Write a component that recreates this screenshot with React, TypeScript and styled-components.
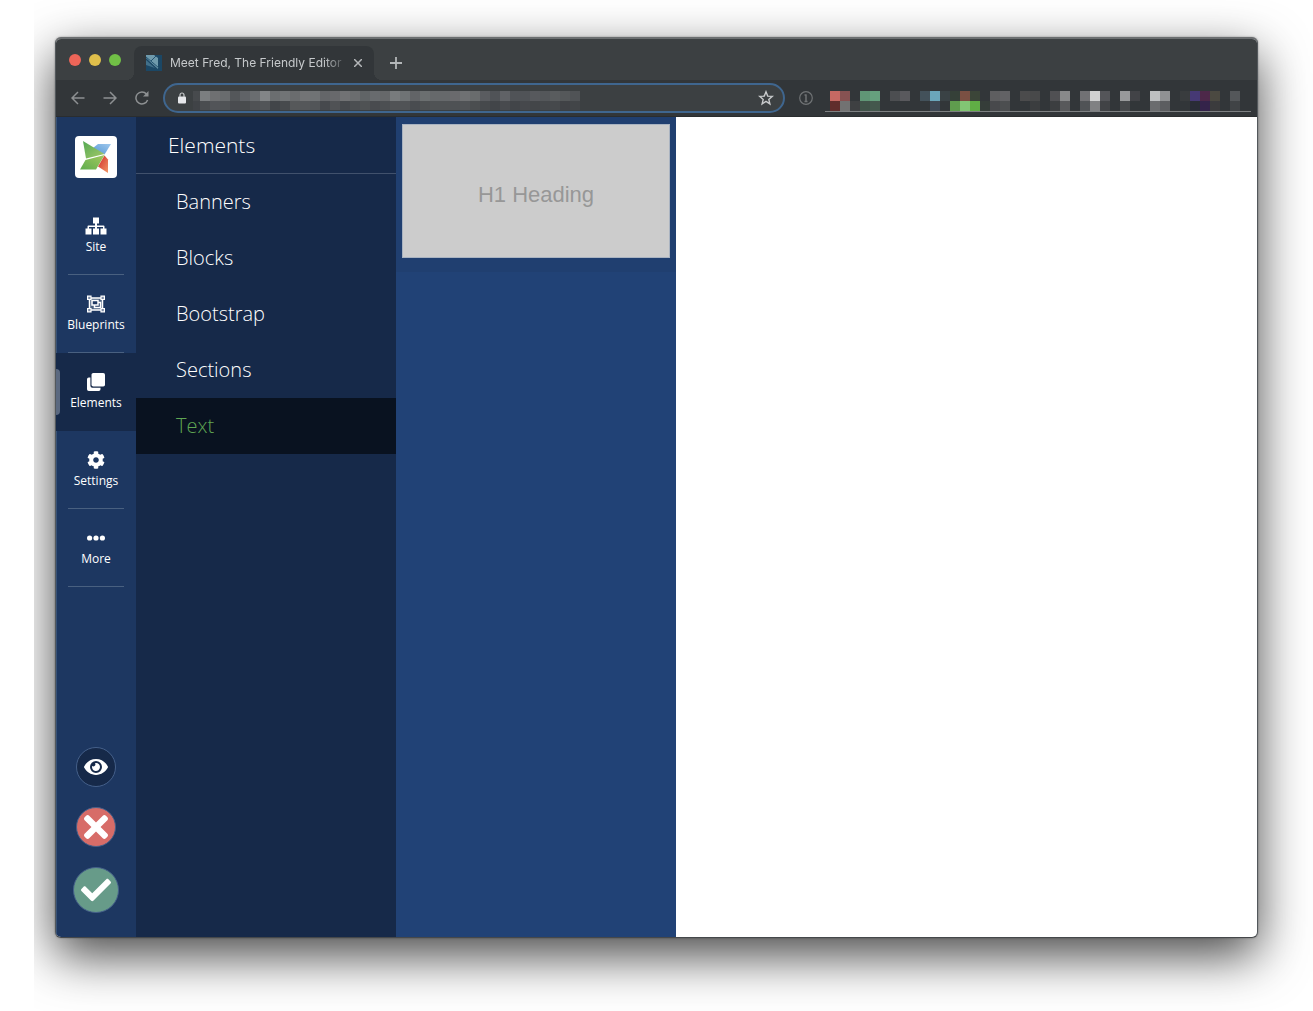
import React from "react";
import styled, { createGlobalStyle } from "styled-components";

const GlobalStyle = createGlobalStyle`
  *, *::before, *::after { box-sizing: border-box; }
  body { margin: 0; background: #fff; font-family: "Open Sans", "Noto Sans", sans-serif; }
  button, a { font: inherit; color: inherit; text-decoration: none; cursor: pointer; }
  button { border: 0; padding: 0; background: none; }
  svg { display: block; flex: none; }
`;

const Desktop = styled.div`
  min-height: 100vh;
  display: flex;
  margin-left: 34px;
  padding: 37px 55px 73px 21px;
  overflow: hidden;
`;

const BrowserWindow = styled.div`
  flex: 1;
  min-width: 0;
  display: flex;
  flex-direction: column;
  overflow: hidden;
  border: 1px solid #53585c;
  border-top: 2px solid #6b6e70;
  border-bottom-color: #45484b;
  border-radius: 6px;
  background: #fff;
  box-shadow: 0 0 2px rgba(0, 0, 0, 0.4), 0 18px 50px rgba(0, 0, 0, 0.72);
`;

const TabStrip = styled.div`
  height: 41px;
  display: flex;
  align-items: flex-end;
  background: #3c4042;
`;

const Lights = styled.div`
  display: flex;
  gap: 8px;
  align-self: center;
  padding: 0 13px;
`;

const Light = styled.button<{ $color: string }>`
  width: 12px;
  height: 12px;
  border-radius: 50%;
  background: ${(p) => p.$color};
`;

const Tab = styled.div`
  position: relative;
  width: 240px;
  height: 34px;
  display: flex;
  align-items: center;
  padding: 0 10px 0 12px;
  border-radius: 8px 8px 0 0;
  background: #323639;

  &::before,
  &::after {
    content: "";
    position: absolute;
    bottom: 0;
    width: 8px;
    height: 8px;
  }
  &::before {
    right: 100%;
    background: radial-gradient(circle at 0 0, transparent 8px, #323639 8px);
  }
  &::after {
    left: 100%;
    background: radial-gradient(circle at 100% 0, transparent 8px, #323639 8px);
  }
`;

const TabTitle = styled.span`
  flex: 1;
  margin: 0 7px 0 8px;
  overflow: hidden;
  white-space: nowrap;
  font: 12px/16px Inter, "Liberation Sans", sans-serif;
  color: #c6c9cb;
  mask-image: linear-gradient(to right, #000 88%, transparent 102%);
`;

const PlainIconButton = styled.button`
  display: grid;
  place-items: center;
  width: 12px;
  height: 16px;
  color: #b4b7b9;
`;

const NewTab = styled(PlainIconButton)`
  height: 34px;
  margin-left: 16px;
`;

const Toolbar = styled.div`
  height: 37px;
  display: flex;
  align-items: center;
  padding: 0 6px 0 14px;
  background: #323639;
  border-bottom: 1px solid #2a2d2f;
`;

const NavButtons = styled.div`
  display: flex;
  gap: 16px;
  margin-right: 13px;
`;

const NavButton = styled(PlainIconButton)`
  width: 16px;
  color: #8d9092;
`;

const AddressBar = styled.div`
  width: 622px;
  height: 30px;
  display: flex;
  align-items: center;
  padding: 0 9px 0 13px;
  border: 2px solid #3f668f;
  border-radius: 15px;
  background: #3c4042;
`;

const Masked = styled.svg`
  margin-left: 6px;
`;

const StarButton = styled(PlainIconButton)`
  width: 16px;
  margin-left: auto;
  color: #c8cacc;
`;

const InfoButton = styled(PlainIconButton)`
  width: 16px;
  margin: 0 11px 0 13px;
  color: #707375;
`;

const Extensions = styled.div`
  flex: 1;
  min-width: 0;
  height: 25px;
  padding-top: 1px;
  margin-top: 2px;
  overflow: hidden;
  border-bottom: 1px solid #7d8082;
`;

const Page = styled.main`
  flex: 1;
  display: flex;
`;

const Sidebar = styled.nav`
  width: 80px;
  display: flex;
  flex-direction: column;
  align-items: center;
  padding: 19px 0 24px;
  box-shadow: inset 1px 0 #3a5376;
  background: #1d3761;
`;

const Logo = styled.a`
  width: 42px;
  height: 42px;
  margin-bottom: 19px;
  border-radius: 4px;
  background: #fff;
`;

const SideItem = styled.button<{ $active?: boolean }>`
  position: relative;
  width: 100%;
  height: 78px;
  display: flex;
  flex-direction: column;
  align-items: center;
  padding-top: 20px;
  gap: 3px;
  background: ${(p) => (p.$active ? "#162949" : "transparent")};
  font-size: 12px;
  line-height: 18px;
  color: #fff;

  &::after {
    content: "";
    width: 56px;
    height: 1px;
    margin-top: auto;
    background: ${(p) => (p.$active ? "transparent" : "#496080")};
  }
`;

const ActiveMark = styled.span`
  position: absolute;
  left: 0;
  top: 16px;
  width: 4px;
  height: 46px;
  border-radius: 0 4px 4px 0;
  background: #5b6980;
`;

const Actions = styled.div`
  margin-top: auto;
  display: flex;
  flex-direction: column;
  align-items: center;
  gap: 20px;
`;

const RoundButton = styled.button<{ $color: string; $size: number }>`
  width: ${(p) => p.$size}px;
  height: ${(p) => p.$size}px;
  display: grid;
  place-items: center;
  border: 1px solid #45608a;
  border-radius: 50%;
  background: ${(p) => p.$color};
  color: #fff;
`;

const Menu = styled.section`
  width: 260px;
  background: #162949;
  color: #fff;
  font-size: 20px;
  font-weight: 300;
`;

const MenuTitle = styled.h2`
  margin: 0;
  padding-left: 32px;
  border-bottom: 1px solid #41516c;
  font-size: 21px;
  font-weight: 300;
  line-height: 56px;
`;

const MenuItem = styled.button<{ $active?: boolean }>`
  display: block;
  width: 100%;
  padding-left: 40px;
  text-align: left;
  line-height: 56px;
  background: ${(p) => (p.$active ? "#091220" : "transparent")};
  color: ${(p) => (p.$active ? "#5fa653" : "inherit")};
`;

const Panel = styled.section`
  width: 280px;
  background: #214276;
`;

const ThumbnailCell = styled.div`
  padding: 7px 6px 14px;
  background: #203f70;
`;

const Thumbnail = styled.button`
  display: block;
  width: 100%;
  height: 134px;
  padding-top: 8px;
  border: 1px solid #a9b3c1;
  background: #ccc;
  color: #979797;
  font-family: "Liberation Sans", sans-serif;
  font-size: 22px;
`;

const URL_TOP = ["#474a4d","#7b7e80","#6f7072","#696c6e","#54575a","#606367","#6a6d70","#828587","#6b6e70","#717476","#6a6c6e","#737476","#707375","#646669","#68696c","#717274","#6b6d6f","#606466","#686b6e","#66686a","#787b7d","#6f7375","#626467","#6b6f70","#66696b","#66696b","#6a6a6d","#6f7173","#696c6d","#5a5c60","#505357","#606266","#505357","#505357","#57595d","#54575a","#595c5e","#55585a","#505356"];
const URL_LOW = ["#404347","#4a4d50","#525458","#505356","#4a4c50","#494c4e","#505255","#525558","#424549","#474a4d","#56585a","#55575a","#525558","#46494d","#505255","#46494d","#4c4f52","#4f5254","#494b4f","#4c4f52","#515356","#505356","#494c50","#4d5052","#505355","#4f5254","#4e5154","#505356","#4b4e50","#46494c","#424549","#484a4e","#424549","#46484c","#434649","#45484b","#46494c","#404246","#424548"];

const EXT: [number, number, string][] = [
  [0,0,"#c66963"],[1,0,"#875252"],[0,1,"#602d2c"],[1,1,"#727272"],[2,1,"#3e4042"],
  [3,0,"#609676"],[4,0,"#66a07e"],[3,1,"#405349"],[4,1,"#44584d"],
  [6,0,"#4c4e51"],[7,0,"#59595d"],[9,0,"#43515a"],[10,0,"#6ba6ba"],[11,0,"#3a4245"],[10,1,"#3f4854"],
  [12,0,"#354038"],[13,0,"#7b5043"],[14,0,"#3b4538"],[12,1,"#5f9c4e"],[13,1,"#82c574"],[14,1,"#60ae45"],[15,1,"#353d39"],
  [16,0,"#5e5e60"],[17,0,"#626265"],[16,1,"#48494c"],[17,1,"#4c4e50"],
  [19,0,"#4b4b4c"],[20,0,"#48494a"],[20,1,"#3b3d3f"],
  [22,0,"#505053"],[23,0,"#88898a"],[22,1,"#3c3e40"],[23,1,"#58595b"],
  [25,0,"#717174"],[26,0,"#d0d1d1"],[27,0,"#545559"],[25,1,"#505356"],[26,1,"#808183"],[27,1,"#414346"],
  [29,0,"#98999b"],[30,0,"#424347"],[29,1,"#46484b"],
  [32,0,"#bdbfc0"],[33,0,"#909193"],[32,1,"#6b6c6e"],[33,1,"#5c5d60"],
  [35,0,"#393c3e"],[36,0,"#463974"],[37,0,"#4d2849"],[38,0,"#4b4941"],[36,1,"#292c36"],[37,1,"#34234a"],[38,1,"#3b3b3d"],
  [40,0,"#54575a"],[40,1,"#404346"],
];

const SiteIcon = () => (
  <svg width="22" height="18" viewBox="0 0 22 18" fill="currentColor">
    <path d="M8 .5h6v6h-2v2h6.500q1 0 1 1v2H21.500v6h-6v-6h2.500V10H12v1.500h2v6H8v-6h2V10H4v1.500h2.500v6H.5v-6H2.500v-2q0-1 1-1H10v-2H8z" />
  </svg>
);

const BlueprintIcon = () => (
  <svg width="18" height="18" viewBox="0 0 18 18" fill="none" stroke="currentColor">
    <path d="M2.500 3h13v12h-13z" strokeWidth="1.500" fill="#4a6080" />
    <path d="M7.500 8v4.500h6v-5H11" strokeWidth="1.500" fill="#1d3761" />
    <path d="M5 5.500h6v4.500H5z" strokeWidth="1.500" fill="#1d3761" />
    <path d="M.6 1.100h3.400v3.400H.6zM14 1.100h3.400v3.400H14zM.6 13.500h3.400v3.400H.6zM14 13.500h3.400v3.400H14z" strokeWidth="1.200" fill="#7c8ba5" />
  </svg>
);

const ElementsIcon = () => (
  <svg width="18" height="18" viewBox="0 0 18 18" fill="currentColor">
    <rect x="4.500" width="13.500" height="13.500" rx="1.800" />
    <path d="M3.400 4.500v8.300a1.900 1.900 0 0 0 1.900 1.900h8.200v1.500A1.800 1.800 0 0 1 11.700 18H1.800A1.800 1.800 0 0 1 0 16.200V6.300a1.800 1.800 0 0 1 1.800-1.800z" />
  </svg>
);

const GearIcon = () => (
  <svg width="18" height="18" viewBox="0 0 512 512" fill="currentColor">
    <path d="M487.400 315.700l-42.600-24.600c4.300-23.200 4.300-47 0-70.200l42.600-24.600c4.900-2.800 7.100-8.600 5.500-14-11.100-35.600-30-67.800-54.700-94.600-3.800-4.100-10-5.100-14.800-2.300L380.800 110c-17.900-15.400-38.500-27.300-60.800-35.100V25.800c0-5.600-3.900-10.500-9.400-11.700-36.700-8.200-74.300-7.800-109.200 0-5.500 1.200-9.400 6.100-9.400 11.700V75c-22.200 7.900-42.800 19.800-60.800 35.100L88.700 85.500c-4.900-2.800-11-1.900-14.800 2.300-24.700 26.700-43.600 58.900-54.700 94.600-1.700 5.400.6 11.200 5.500 14L67.300 221c-4.300 23.200-4.300 47 0 70.200l-42.600 24.600c-4.900 2.800-7.100 8.600-5.500 14 11.100 35.600 30 67.800 54.700 94.600 3.800 4.100 10 5.100 14.800 2.300l42.600-24.600c17.900 15.400 38.500 27.300 60.800 35.100v49.200c0 5.600 3.900 10.500 9.400 11.700 36.700 8.200 74.300 7.800 109.200 0 5.500-1.200 9.400-6.100 9.400-11.700v-49.200c22.200-7.900 42.800-19.800 60.800-35.100l42.600 24.600c4.900 2.800 11 1.900 14.800-2.300 24.700-26.700 43.600-58.900 54.700-94.600 1.500-5.500-.7-11.300-5.600-14.100zM256 336c-44.100 0-80-35.900-80-80s35.900-80 80-80 80 35.900 80 80-35.900 80-80 80z" />
  </svg>
);

const MoreIcon = () => (
  <svg width="18" height="18" viewBox="0 0 18 18" fill="currentColor">
    <circle cx="2.600" cy="9" r="2.600" />
    <circle cx="9" cy="9" r="2.600" />
    <circle cx="15.400" cy="9" r="2.600" />
  </svg>
);

const EyeIcon = () => (
  <svg width="24" height="22" viewBox="0 0 576 512" fill="currentColor">
    <path d="M572.520 241.400C518.290 135.590 410.930 64 288 64S57.680 135.640 3.480 241.410a32.350 32.350 0 0 0 0 29.190C57.710 376.410 165.070 448 288 448s230.320-71.640 284.520-177.410a32.350 32.350 0 0 0 0-29.190zM288 400a144 144 0 1 1 144-144 143.930 143.930 0 0 1-144 144zm0-240a95.310 95.310 0 0 0-25.310 3.790 47.850 47.850 0 0 1-66.900 66.900A95.780 95.780 0 1 0 288 160z" />
  </svg>
);

const CrossIcon = () => (
  <svg width="24" height="24" viewBox="0 80 352 352" fill="currentColor">
    <path d="M242.720 256l100.070-100.070c12.280-12.280 12.280-32.190 0-44.480l-22.240-22.240c-12.280-12.280-32.190-12.280-44.480 0L176 189.280 75.930 89.210c-12.280-12.280-32.190-12.280-44.480 0L9.210 111.450c-12.280 12.280-12.280 32.190 0 44.480L109.280 256 9.210 356.070c-12.280 12.280-12.280 32.190 0 44.480l22.240 22.240c12.280 12.280 32.200 12.280 44.480 0L176 322.720l100.070 100.070c12.280 12.280 32.200 12.280 44.480 0l22.240-22.240c12.280-12.280 12.280-32.190 0-44.480L242.720 256z" />
  </svg>
);

const CheckIcon = () => (
  <svg width="30" height="30" viewBox="0 0 512 512" fill="currentColor">
    <path d="M173.900 439.400L7.500 273c-10-10-10-26.200 0-36.200l36.200-36.200c10-10 26.200-10 36.200 0L192 312.700 432.100 72.600c10-10 26.200-10 36.200 0l36.200 36.200c10 10 10 26.200 0 36.200L210.100 439.400c-10 10-26.200 10-36.200 0z" />
  </svg>
);

const LogoMark = () => (
  <svg width="42" height="42" viewBox="0 0 42 42">
    <defs>
      <linearGradient id="green" x1="0" y1="0" x2="1" y2="1"><stop stopColor="#54a955" /><stop offset="1" stopColor="#a5c968" /></linearGradient>
      <linearGradient id="green2" x1="0" y1="1" x2="1" y2="0"><stop stopColor="#5fad4e" /><stop offset="1" stopColor="#a3c85e" /></linearGradient>
      <linearGradient id="blue" x1="0" y1="1" x2="1" y2="0"><stop stopColor="#5497d4" /><stop offset="1" stopColor="#a0c8ed" /></linearGradient>
      <linearGradient id="red" x1="0" y1="0" x2="1" y2="1"><stop stopColor="#cf2a2b" /><stop offset="1" stopColor="#f29766" /></linearGradient>
    </defs>
    <path d="M23 8h13l-6.500 10.500L18 12z" fill="url(#blue)" />
    <path d="M8 5l21.500 13L11 22.500z" fill="url(#green)" />
    <path d="M10.500 24L29.500 19l-8.500 14.500H5z" fill="url(#green2)" />
    <path d="M29.500 19.500l3.500 4V37l-10-6.500z" fill="url(#red)" />
  </svg>
);

const SIDE_ITEMS = [
  { label: "Site", Icon: SiteIcon },
  { label: "Blueprints", Icon: BlueprintIcon },
  { label: "Elements", Icon: ElementsIcon, active: true },
  { label: "Settings", Icon: GearIcon },
  { label: "More", Icon: MoreIcon },
];

const CATEGORIES = ["Banners", "Blocks", "Bootstrap", "Sections", "Text"];

export default function App() {
  return (
    <>
      <GlobalStyle />
      <Desktop>
        <BrowserWindow>
          <TabStrip>
            <Lights>
              <Light $color="#ed6558" aria-label="Close window" />
              <Light $color="#e0bf4b" aria-label="Minimise window" />
              <Light $color="#71c046" aria-label="Zoom window" />
            </Lights>
            <Tab>
              <svg width="16" height="16" viewBox="0 0 16 16">
                <rect width="16" height="16" fill="#1b4765" />
                <path d="M0 0h8l4 3v11L0 3z" fill="#6f9aac" />
                <path d="M0 5l9 8-9-3z" fill="#42708a" />
                <path d="M0 2l13 11M5 6l5-5" stroke="#235270" />
              </svg>
              <TabTitle>Meet Fred, The Friendly Editor</TabTitle>
              <PlainIconButton aria-label="Close tab">
                <svg width="8" height="8" viewBox="0 0 8 8" stroke="currentColor" strokeWidth="1.500"><path d="M0 0l8 8M8 0L0 8" /></svg>
              </PlainIconButton>
            </Tab>
            <NewTab aria-label="New tab">
              <svg width="12" height="12" viewBox="0 0 12 12" stroke="currentColor" strokeWidth="1.800"><path d="M6 0v12M0 6h12" /></svg>
            </NewTab>
          </TabStrip>
          <Toolbar>
            <NavButtons>
              <NavButton aria-label="Back">
                <svg width="14" height="14" viewBox="0 0 14 14" fill="none" stroke="currentColor" strokeWidth="1.500"><path d="M13.500 7H1.500M7 1L1 7l6 6" /></svg>
              </NavButton>
              <NavButton aria-label="Forward">
                <svg width="14" height="14" viewBox="0 0 14 14" fill="none" stroke="currentColor" strokeWidth="1.500"><path d="M.5 7h12M7 1l6 6-6 6" /></svg>
              </NavButton>
              <NavButton aria-label="Reload">
                <svg width="14" height="14" viewBox="0 0 14 14" fill="none" stroke="currentColor" strokeWidth="1.500"><path d="M12.600 9A6 6 0 1 1 11.500 3l1 1.200" /><path d="M13.500 0v5.500H8z" fill="currentColor" stroke="none" /></svg>
              </NavButton>
            </NavButtons>
            <AddressBar>
              <svg width="8" height="12" viewBox="0 0 8 12"><rect y="4.500" width="8" height="7" rx="1" fill="#e6e7ea" /><path d="M2 5V3a2 2 0 0 1 4 0v2" fill="none" stroke="#c9cbcd" strokeWidth="1.200" /></svg>
              <Masked width="392" height="24" viewBox="0 0 392 24" shapeRendering="crispEdges" aria-hidden="true">
                {URL_TOP.map((c, i) => <rect key={`t${i}`} x={i ? i * 10 - 2 : 1} width={i ? 10 : 7} y="5" height="10" fill={c} />)}
                {URL_LOW.map((c, i) => <rect key={`b${i}`} x={i ? i * 10 - 2 : 1} width={i ? 10 : 7} y="15" height="9" fill={c} />)}
              </Masked>
              <StarButton aria-label="Bookmark this page">
                <svg width="16" height="16" viewBox="0 0 16 16" fill="none" stroke="currentColor" strokeWidth="1.400"><path d="M8 1.800l1.700 4.300 4.600.3-3.500 3 1.100 4.500L8 11.400l-3.900 2.500 1.100-4.500-3.500-3 4.600-.3z" /></svg>
              </StarButton>
            </AddressBar>
            <InfoButton aria-label="Site information">
              <svg width="14" height="14" viewBox="0 0 14 14" fill="none" stroke="currentColor"><circle cx="7" cy="7" r="6.300" strokeWidth="1.200" /><path d="M7 3.500v7M5.500 4h2M5.500 10.500h3" strokeWidth="1.500" /></svg>
            </InfoButton>
            <Extensions>
              <svg width="424" height="24" viewBox="0 0 424 24" shapeRendering="crispEdges" aria-hidden="true">
                {EXT.map(([x, y, c]) => <rect key={`${x}-${y}`} x={5 + x * 10} y={3 + y * 10} width="10" height="10" fill={c} />)}
              </svg>
            </Extensions>
          </Toolbar>
          <Page>
            <Sidebar aria-label="Editor">
              <Logo href="#" aria-label="Home"><LogoMark /></Logo>
              {SIDE_ITEMS.map(({ label, Icon, active }) => (
                <SideItem key={label} $active={active}>
                  {active && <ActiveMark />}
                  <Icon />
                  {label}
                </SideItem>
              ))}
              <Actions>
                <RoundButton $color="#162949" $size={40} aria-label="Preview"><EyeIcon /></RoundButton>
                <RoundButton $color="#d76c68" $size={40} aria-label="Cancel"><CrossIcon /></RoundButton>
                <RoundButton $color="#679b89" $size={46} aria-label="Save"><CheckIcon /></RoundButton>
              </Actions>
            </Sidebar>
            <Menu>
              <MenuTitle>Elements</MenuTitle>
              {CATEGORIES.map((name) => (
                <MenuItem key={name} $active={name === "Text"}>{name}</MenuItem>
              ))}
            </Menu>
            <Panel>
              <ThumbnailCell>
                <Thumbnail>H1 Heading</Thumbnail>
              </ThumbnailCell>
            </Panel>
          </Page>
        </BrowserWindow>
      </Desktop>
    </>
  );
}
